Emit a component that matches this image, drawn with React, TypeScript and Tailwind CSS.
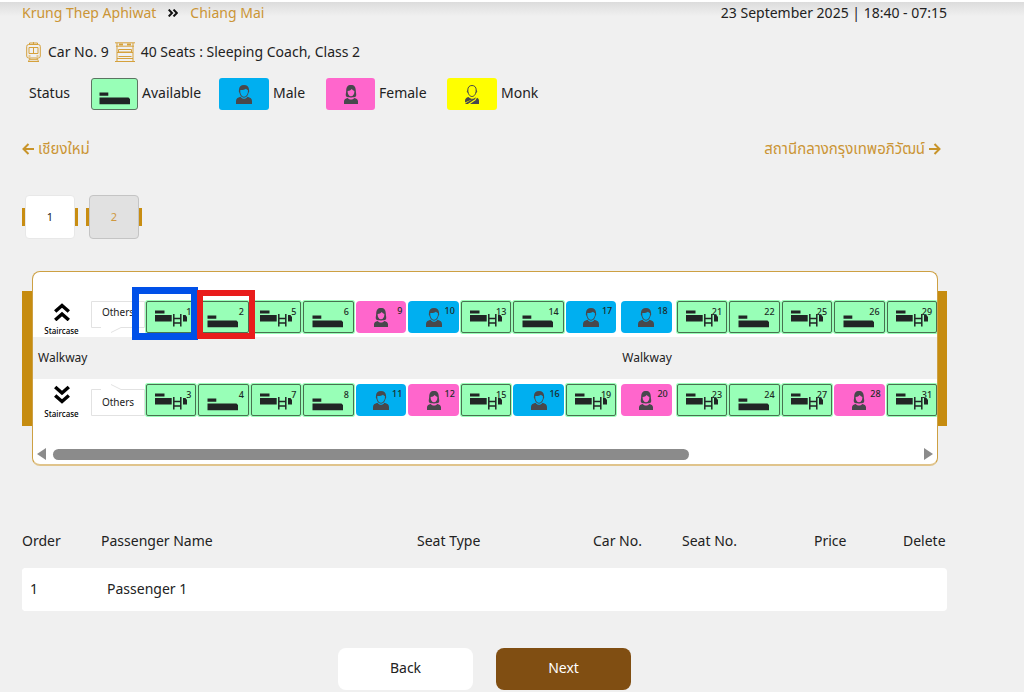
import React from "react";

type Kind = "upper" | "lower" | "male" | "female" | "monk";
type Seat = { no: number; kind: Kind; spaced?: boolean; mark?: "blue" | "red" };

const topRow: Seat[] = [
  { no: 1, kind: "upper", mark: "blue" },
  { no: 2, kind: "lower", mark: "red" },
  { no: 5, kind: "upper" },
  { no: 6, kind: "lower" },
  { no: 9, kind: "female" },
  { no: 10, kind: "male" },
  { no: 13, kind: "upper" },
  { no: 14, kind: "lower" },
  { no: 17, kind: "male" },
  { no: 18, kind: "male", spaced: true },
  { no: 21, kind: "upper", spaced: true },
  { no: 22, kind: "lower" },
  { no: 25, kind: "upper" },
  { no: 26, kind: "lower" },
  { no: 29, kind: "upper" },
];

const bottomRow: Seat[] = [
  { no: 3, kind: "upper" },
  { no: 4, kind: "lower" },
  { no: 7, kind: "upper" },
  { no: 8, kind: "lower" },
  { no: 11, kind: "male" },
  { no: 12, kind: "female" },
  { no: 15, kind: "upper" },
  { no: 16, kind: "male" },
  { no: 19, kind: "upper" },
  { no: 20, kind: "female", spaced: true },
  { no: 23, kind: "upper", spaced: true },
  { no: 24, kind: "lower" },
  { no: 27, kind: "upper" },
  { no: 28, kind: "female" },
  { no: 31, kind: "upper" },
];

function PersonIcon({ kind }: { kind: Kind }) {
  return (
    <svg viewBox="0 0 16 19" className="h-[19px] w-4 shrink-0" fill="#48484c" aria-hidden="true">
      {kind === "male" && (
        <>
          <path fillRule="evenodd" d="M8 0C4.900 0 3 1.700 3 4.600L2.800 6.500 3.500 8C4.200 10.800 6 12.700 8 12.700S11.800 10.800 12.500 8L13.200 6.500 13 4.600C13 1.700 11.100 0 8 0ZM4.300 5C6.500 5.200 9 4.400 10 3.700 10.700 4.500 11.400 4.900 11.900 5V7.200C11.200 10 9.800 11.700 8 11.700S4.800 10 4.300 7.200Z" />
          <path d="M4.600 11.700C1.500 12.600 0 13.700 0 16V19H16V16C16 13.700 14.500 12.600 11.400 11.700 10.500 13.100 9.400 13.800 8 13.800S5.500 13.100 4.600 11.700Z" />
        </>
      )}
      {kind === "female" && (
        <>
          <path fillRule="evenodd" d="M8 0C4.600 0 3.300 2 3.200 5.500 3.100 8.500 2.400 9.400 3 11.200 4 12.300 5.200 12.400 6.400 12.200 7.500 12.700 8.500 12.700 9.600 12.200 10.800 12.400 12 12.300 13 11.200 13.600 9.400 12.900 8.500 12.800 5.500 12.700 2 11.400 0 8 0ZM4.600 6C6.500 5.800 7.700 5 8.700 3.900 9.500 5 10.400 5.700 11.400 6 11.500 9.200 10 11.300 8 11.300S4.500 9.200 4.600 6Z" />
          <path d="M4.800 12.900C2.200 13.500 1 14.500 1 16.600V19H15V16.600C15 14.500 13.800 13.500 11.200 12.900 10.300 14 9.300 14.500 8 14.500S5.700 14 4.800 12.900Z" />
        </>
      )}
      {kind === "monk" && (
        <>
          <path d="M8 .5C5.400.5 3.800 2.200 3.800 5 3.800 8.700 5.600 11.500 8 11.500S12.200 8.700 12.200 5C12.200 2.200 10.600.5 8 .5ZM3.800 5.500C3 5.500 3.200 7.500 4.300 7.800M12.200 5.500C13 5.500 12.800 7.500 11.700 7.800" fill="none" stroke="#48484c" strokeWidth="1" />
          <path d="M4.500 12C2.200 12.700 1 13.700 1 16V17.500L9.500 13.700C7.500 14 5.700 13.300 4.500 12ZM12 12.200 1.500 18.300V19H3.800L9 15.500 11 14.300ZM13 12.700 11.500 15.300 6 19H15V15.700C15 14.200 14.300 13.300 13 12.700Z" />
        </>
      )}
    </svg>
  );
}

function BedIcon({ upper }: { upper: boolean }) {
  return (
    <svg viewBox="0 0 32 18" className="h-[18px] w-8 shrink-0" fill="#212525" aria-hidden="true">
      {upper ? (
        <>
          <path d="M0 .5h9.500v3H0zM0 5h16.700v6.500H0zM28 5h2.500l1.500 2V11.500h-4z" />
          <path d="M18.800 4V16.500M25.800 4V16.500M18.800 8.500h7M18.800 13h7" stroke="#212525" strokeWidth="1.500" fill="none" />
        </>
      ) : (
        <path d="M.5 5.500H9.300v3.300H.5zM.5 10.500H29.500L31 12V17.300H.500z" />
      )}
    </svg>
  );
}

function SeatButton({ seat }: { seat: Seat }) {
  const bed = seat.kind === "upper" || seat.kind === "lower";
  const look = bed
    ? "rounded-[2px] border border-[#47714f] bg-[#98ffb7] pl-2 pt-1 ring-1 ring-[#98ffb7]"
    : seat.kind === "male"
      ? "justify-center rounded bg-[#00aff0]"
      : "justify-center rounded bg-[#ff66cc]";
  return (
    <div className={`min-w-0 flex-1 basis-0 ${seat.spaced ? "ml-[3px]" : ""}`}>
      <button
        type="button"
        aria-label={`Seat ${seat.no}`}
        className={`relative flex h-8 w-full items-center ${look}`}
      >
        {bed ? <BedIcon upper={seat.kind === "upper"} /> : <PersonIcon kind={seat.kind} />}
        <span className="absolute right-1 top-1 text-[9px] font-medium leading-3 text-[#1c2b26]">{seat.no}</span>
        {seat.mark === "blue" && <span className="absolute -bottom-2 -left-[15px] -right-[3px] -top-[15px] z-10 border-[7px] border-[#0050e8]" />}
        {seat.mark === "red" && <span className="absolute -bottom-[7px] -left-[2px] -right-[7px] -top-3 z-10 border-[6px] border-[#e91c1c]" />}
      </button>
    </div>
  );
}

function Stairs({ down }: { down?: boolean }) {
  return (
    <div className="flex w-[57px] shrink-0 flex-col items-center">
      <svg viewBox="0 0 16 20" className="h-5 w-4" fill="none" stroke="#000" strokeWidth="3.500" aria-hidden="true">
        {down ? <path d="M1.200 3 8 9 14.800 3M1.200 11.500 8 17.500 14.800 11.500" /> : <path d="M1.200 10.500 8 4.500 14.800 10.500M1.200 19 8 13 14.800 19" />}
      </svg>
      <span className="mt-1 text-[8px] font-medium leading-3 text-black">Staircase</span>
    </div>
  );
}

function Others({ flipped }: { flipped?: boolean }) {
  return (
    <div className="relative ml-px h-8 w-[54px] shrink-0">
      <svg viewBox="0 0 54 32" className="block h-8 w-[54px]" fill="none" stroke="#e2e2e2" aria-hidden="true">
        {flipped ? <path d="M10 5.500H.5V31.500H53.500V5.500H30L20 .5" /> : <path d="M10 26.500H.5V.5H53.500V26.500H30L20 31.500" />}
      </svg>
      <span className={`absolute inset-x-0 text-center text-[10px] leading-4 text-[#222] ${flipped ? "top-2.5" : "top-[3px]"}`}>Others</span>
    </div>
  );
}

function SeatRow({ seats, down }: { seats: Seat[]; down?: boolean }) {
  return (
    <div className="flex items-start">
      <Stairs down={down} />
      <Others flipped={down} />
      <div className="ml-px flex min-w-0 flex-1 gap-0.5">
        {seats.map((s) => (
          <SeatButton key={s.no} seat={s} />
        ))}
      </div>
    </div>
  );
}

function Legend({ label, kind, color, width }: { label: string; kind: Kind; color: string; width: string }) {
  return (
    <li className={`flex items-center gap-1 ${width}`}>
      <span className={`flex h-8 items-center justify-center rounded-[3px] ${color}`}>
        {kind === "lower" ? <BedIcon upper={false} /> : <PersonIcon kind={kind} />}
      </span>
      <span className="pb-0.5">{label}</span>
    </li>
  );
}

function CarTab({ label, active }: { label: string; active?: boolean }) {
  return (
    <div className="flex items-center">
      <span className="h-[18px] w-[3px] bg-[#c88d12]" />
      <button
        type="button"
        className={`h-11 w-[50px] rounded border text-[11px] ${active ? "border-[#e8e8e8] bg-white text-[#222]" : "border-[#c4c4c4] bg-[#e1e1e1] text-[#cf9840]"}`}
      >
        {label}
      </button>
      <span className="h-[18px] w-[3px] bg-[#c88d12]" />
    </div>
  );
}

function Arrow({ back }: { back?: boolean }) {
  return (
    <svg viewBox="0 0 12 12" className="mt-0.5 h-3 w-3 shrink-0" fill="none" stroke="#c8942a" strokeWidth="2" aria-hidden="true">
      <path d={back ? "M6.500 1 1.500 6 6.500 11M1.500 6H12" : "M5.500 1 10.500 6 5.500 11M10.500 6H0"} />
    </svg>
  );
}

export default function App() {
  return (
    <div className="min-h-screen bg-[#f0f0f0] font-['Noto_Sans','Noto_Sans_Thai',sans-serif] text-[14px] leading-5 text-[#222]">
      <div className="h-0.5 bg-white" />
      <div className="bg-linear-to-b from-[#dcdcdc] to-[#f0f0f0] to-[14px] pl-[22px] pr-[77px]">
        <header className="flex justify-between pt-px">
          <h1 className="flex items-center text-[#cb9535]">
            Krung Thep Aphiwat
            <svg viewBox="0 0 10 8" className="mx-3 h-2 w-2.5" fill="none" stroke="#111" strokeWidth="2" aria-hidden="true">
              <path d="M.7.600 4 4 .7 7.400M5.500.600 8.800 4 5.500 7.400" />
            </svg>
            Chiang Mai
          </h1>
          <p>23 September 2025 | 18:40 - 07:15</p>
        </header>

        <div className="mt-[19px] flex items-center pl-1">
          <svg viewBox="0 0 15 20" className="mr-[7px] h-5 w-[15px]" fill="none" stroke="#d5a13c" aria-hidden="true">
            <rect x=".7" y="2.500" width="13.600" height="13.500" rx="2" />
            <path d="M3.500 2.500V1h8v1.500M7.500 0v2.500M3 5.500h9v6H3zM7.500 5.500v6M2.500 14h2M10.500 14h2M4 16l-1.500 3.500M11 16l1.500 3.500M2 19.500h11M4 17.700h7" />
          </svg>
          Car No. 9
          <svg viewBox="0 0 20 20" className="mx-[6px] h-5 w-5" fill="none" stroke="#d5a13c" aria-hidden="true">
            <path d="M0 .8h20M1 4.200h18M2 1v18M18 1v18M0 19.500h20M3.500 7.500h13v2.500h-13zM2 10.500h16M3.500 14.500h13M2 16.500h16" />
            <path d="M4 1.500h4v2H4zM12 1.500h4v2h-4z" fill="#d5a13c" stroke="none" />
          </svg>
          40 Seats : Sleeping Coach, Class 2
        </div>

        <div className="mt-4 flex h-8 items-center pl-[7px]">
          <span className="w-[62px] pb-0.5">Status</span>
          <ul className="flex">
            <Legend label="Available" kind="lower" color="w-[47px] border border-[#5b7461] bg-[#98ffb7] pt-[3px]" width="w-32" />
            <Legend label="Male" kind="male" color="w-[50px] bg-[#00aff0]" width="w-[107px]" />
            <Legend label="Female" kind="female" color="w-[49px] bg-[#ff66cc]" width="w-[121px]" />
            <Legend label="Monk" kind="monk" color="w-[50px] bg-[#ffff00]" width="w-28" />
          </ul>
        </div>

        <div className="mt-7 flex items-center justify-between pr-1.5 text-[15px] text-[#cb9535]">
          <span className="flex items-center gap-1">
            <Arrow back />
            เชียงใหม่
          </span>
          <span className="flex items-center gap-1">
            สถานีกลางกรุงเทพอภิวัฒน์
            <Arrow />
          </span>
        </div>

        <nav className="mt-[37px] flex gap-2">
          <CarTab label="1" active />
          <CarTab label="2" />
        </nav>

        <section className="mt-8 flex">
          <div className="mb-10 mt-5 w-2.5 bg-[#c68c10]" />
          <div className="min-w-0 flex-1 overflow-hidden rounded-lg border border-b-2 border-[#cda043] border-b-[#e0c48c] bg-white">
            <div className="h-[65px] pt-[29px]">
              <SeatRow seats={topRow} />
            </div>
            <div className="flex h-[42px] items-center bg-[#f0f0f0] pl-[5px] text-[12px]">
              <span className="w-[65%]">Walkway</span>
              <span>Walkway</span>
            </div>
            <div className="pt-[5px]">
              <SeatRow seats={bottomRow} down />
            </div>
            <div className="mt-6 flex h-5 items-center justify-between px-1" aria-hidden="true">
              <svg viewBox="0 0 9 12" className="h-3 w-[9px]" fill="#8b8b8b"><path d="M9 0V12L0 6Z" /></svg>
              <div className="ml-[7px] flex-1">
                <div className="h-[11px] w-[73%] rounded-full bg-[#8b8b8b]" />
              </div>
              <svg viewBox="0 0 9 12" className="h-3 w-[9px]" fill="#8b8b8b"><path d="M0 0V12L9 6Z" /></svg>
            </div>
          </div>
          <div className="mb-10 mt-5 w-[9px] bg-[#c68c10]" />
        </section>

        <table className="mt-14 w-full table-fixed border-separate border-spacing-0 text-left">
          <colgroup>
            <col className="w-[79px]" />
            <col />
            <col className="w-[176px]" />
            <col className="w-[89px]" />
            <col className="w-[132px]" />
            <col className="w-[89px]" />
            <col className="w-11" />
          </colgroup>
          <thead>
            <tr className="h-[46px] align-middle">
              {["Order", "Passenger Name", "Seat Type", "Car No.", "Seat No.", "Price", "Delete"].map((h) => (
                <th key={h} className="whitespace-nowrap pt-0 pb-2 font-normal">{h}</th>
              ))}
            </tr>
          </thead>
          <tbody>
            <tr className="h-[43px] bg-white">
              <td className="rounded-l bg-white pb-0.5 pl-2">1</td>
              <td className="pb-0.5 pl-1.5">Passenger 1</td>
              <td />
              <td />
              <td />
              <td />
              <td className="rounded-r" />
            </tr>
          </tbody>
        </table>

        <div className="mt-[37px] flex justify-center gap-[23px]">
          <button type="button" className="h-[42px] w-[135px] rounded-lg bg-white pb-0.5">Back</button>
          <button type="button" className="h-[42px] w-[135px] rounded-lg bg-[#804e12] pb-0.5 text-white">Next</button>
        </div>
      </div>
    </div>
  );
}
